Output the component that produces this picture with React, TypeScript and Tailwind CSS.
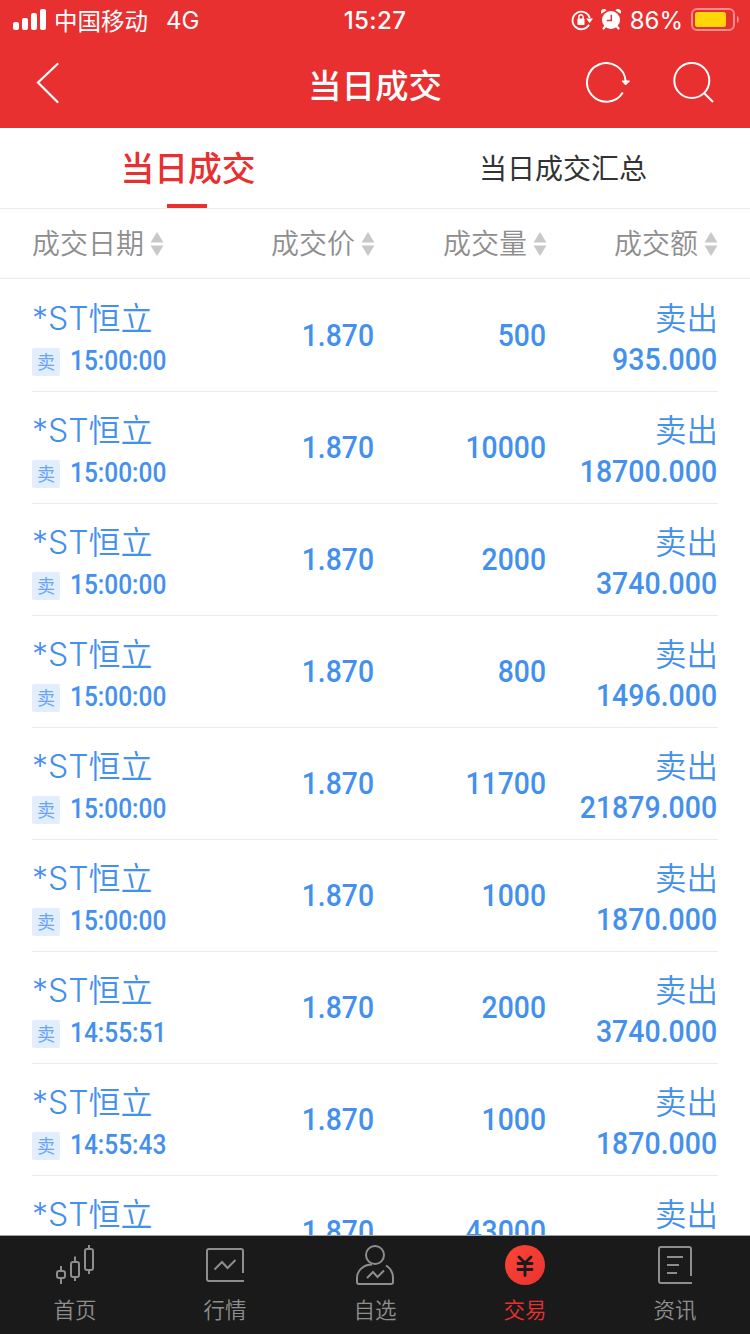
import { ReactNode } from "react";
import clsx from "clsx";

interface Deal {
  time: string;
  price: string;
  volume: string;
  amount: string;
}

const deals: Deal[] = [
  { time: "15:00:00", price: "1.870", volume: "500", amount: "935.000" },
  { time: "15:00:00", price: "1.870", volume: "10000", amount: "18700.000" },
  { time: "15:00:00", price: "1.870", volume: "2000", amount: "3740.000" },
  { time: "15:00:00", price: "1.870", volume: "800", amount: "1496.000" },
  { time: "15:00:00", price: "1.870", volume: "11700", amount: "21879.000" },
  { time: "15:00:00", price: "1.870", volume: "1000", amount: "1870.000" },
  { time: "14:55:51", price: "1.870", volume: "2000", amount: "3740.000" },
  { time: "14:55:43", price: "1.870", volume: "1000", amount: "1870.000" },
  { time: "14:55:43", price: "1.870", volume: "43000", amount: "80410.000" },
];

const columns = ["成交日期", "成交价", "成交量", "成交额"];

function StatusBar() {
  return (
    <div className="grid h-10 grid-cols-3 items-start">
      <div className="flex items-start pl-[13px]">
        <svg className="mt-[9px]" width="33" height="21" fill="white">
          <rect x="0" y="13" width="6" height="8" rx="2" />
          <rect x="9" y="9" width="6" height="12" rx="2" />
          <rect x="18" y="4" width="6" height="17" rx="2" />
          <rect x="27" y="0" width="6" height="21" rx="2" />
        </svg>
        <span className="ml-2 text-[23.5px] leading-[43px]">中国移动</span>
        <span className="ml-[18px] text-[24px] leading-[42px]">4G</span>
      </div>
      <div className="text-center text-[24px] font-medium leading-[42px] tracking-[0.4px]">15:27</div>
      <div className="flex items-start justify-end pr-[10px]">
        <svg className="mt-[9px]" width="22" height="22" viewBox="0 0 22 22" fill="none" stroke="white" strokeWidth="1.8">
          <path d="M18 15.800A8.800 8.800 0 1 1 18.8 9" />
          <path d="M15.2 9.5h6.8l-3.4 4.500z" fill="white" stroke="none" />
          <rect x="6.500" y="9.5" width="7" height="6.500" rx="0.8" fill="white" stroke="none" />
          <path d="M7.8 10V8a2.2 2.2 0 0 1 4.4 0v2" strokeWidth="1.4" />
        </svg>
        <svg className="mt-[9px] ml-2" width="20" height="22" viewBox="0 0 20 22">
          <circle cx="10" cy="11" r="9" fill="white" />
          <path d="M0.5 4.8a3 3 0 0 1 5-3.4zM19.5 4.8a3 3 0 0 0-5-3.4z" fill="white" />
          <path d="m4.5 17-2 2.5m13-2.5 2 2.5" stroke="white" strokeWidth="2.2" strokeLinecap="round" />
          <path d="M10.3 5.8v5.6H5.8" fill="none" stroke="#e83030" strokeWidth="1.5" />
        </svg>
        <span className="ml-[9px] text-[24px] leading-[42px]">86%</span>
        <svg className="mt-2 ml-2" width="49" height="23" viewBox="0 0 49 23">
          <rect x="1" y="1" width="42" height="21" rx="5" fill="none" stroke="white" strokeOpacity="0.45" strokeWidth="2" />
          <rect x="4" y="4" width="31" height="15" rx="2.5" fill="#ffd60a" />
          <path d="M46 8c2.4 1.2 2.4 6 0 7z" fill="white" fillOpacity="0.5" />
        </svg>
      </div>
    </div>
  );
}

function TitleBar() {
  return (
    <div className="grid h-22 grid-cols-3 items-start">
      <svg className="mt-[22px] ml-9" width="24" height="42" viewBox="0 0 24 42" fill="none" stroke="white" strokeWidth="2.2">
        <path d="M21.5 2 2 20.5 21.5 40" strokeLinecap="round" />
      </svg>
      <h1 className="pt-1 text-center text-[33.5px] font-medium leading-[84px]">当日成交</h1>
      <div className="flex justify-end pt-[22px] pr-[35px]">
        <svg width="44" height="42" viewBox="0 0 44 42" fill="none" stroke="white" strokeWidth="2">
          <path d="M36.8 30.5A19.3 19.3 0 1 1 39.6 19" />
          <path d="M36 19h7.5L39.6 23z" fill="white" stroke="white" strokeWidth="1" strokeLinejoin="round" />
        </svg>
        <svg className="ml-[43px]" width="42" height="42" viewBox="0 0 42 42" fill="none" stroke="white" strokeWidth="2">
          <circle cx="18.8" cy="18.500" r="17.500" />
          <path d="m31 31 9 9" />
        </svg>
      </div>
    </div>
  );
}

function SortIcon() {
  return (
    <svg className="ml-1.5 shrink-0" width="14" height="24" viewBox="0 0 14 24" fill="#c8c8c8">
      <path d="M7 0 13.5 10.5H0.5z" />
      <path d="M7 24 13.5 13.5H0.5z" />
    </svg>
  );
}

function DealRow({ deal }: { deal: Deal }) {
  return (
    <div className="mx-8 grid h-28 shrink-0 grid-cols-[342px_172px_172px] border-b border-[#ebebeb] text-[#4390ee]">
      <div className="grid grid-cols-2">
        <div className="pt-4">
          <div className="whitespace-nowrap text-[32px] font-[350] leading-[46px]">*ST恒立</div>
          <div className="mt-[6px] flex h-7 items-center">
            <span className="flex size-7 items-center justify-center rounded-xs bg-[#e2eefd] pt-[2px] text-[18px] leading-7 text-[#69a6f2]">
              卖
            </span>
            <span className="-mt-[2px] ml-[10px] origin-left scale-x-[0.89] font-[Roboto] text-[27.5px] font-medium leading-7">
              {deal.time}
            </span>
          </div>
        </div>
        <Figure value={deal.price} />
      </div>
      <Figure value={deal.volume} />
      <div className="pt-4 text-right">
        <div className="text-[31.5px] font-[350] leading-[46px]">卖出</div>
        <div className="origin-right scale-x-[0.89] pr-px font-[Roboto] text-[32px] font-medium leading-[35px]">
          {deal.amount}
        </div>
      </div>
    </div>
  );
}

function Figure({ value }: { value: string }) {
  return (
    <div className="origin-right scale-x-[0.885] text-right font-[Roboto] text-[32px] font-medium leading-[110px]">
      {value}
    </div>
  );
}

function NavItem({ label, active, children }: { label: string; active?: boolean; children: ReactNode }) {
  return (
    <div className={clsx("flex flex-col items-center pt-[9px]", active ? "text-[#e83030]" : "text-[#8e8e8e]")}>
      <svg width="40" height="40" viewBox="0 0 40 40" fill="none" stroke="currentColor" strokeWidth="2">
        {children}
      </svg>
      <span className="mt-[9px] text-[21.5px] font-[350] leading-8">{label}</span>
    </div>
  );
}

function BottomNav() {
  return (
    <nav className="grid h-[99px] shrink-0 grid-cols-5 border-t border-[#a0a0a0] bg-[#1a1a1a]">
      <NavItem label="首页">
        <rect x="2" y="26" width="8" height="7" rx="2" />
        <rect x="16" y="17" width="8" height="15" rx="2" />
        <rect x="30" y="4" width="8" height="21" rx="2" />
        <path d="M6 21v5m0 7v6M20 11.5V17m0 15v4M34 0v4m0 21v4" />
      </NavItem>
      <NavItem label="行情">
        <path d="M38 28V6a2 2 0 0 0-2-2H4a2 2 0 0 0-2 2v28a2 2 0 0 0 2 2h35" />
        <path d="m9.5 24.5 7.5-7.5 5.5 6 8-8" />
      </NavItem>
      <NavItem label="自选">
        <circle cx="20" cy="10" r="9" />
        <path d="M17 19.5C8 19.5 2 26 2 33v4a2 2 0 0 0 2 2h32a2 2 0 0 0 2-2v-4c0-5-2-9.5-7-12.5" />
        <path d="m12 33 6-6 4.5 5 6.5-6.5" />
      </NavItem>
      <NavItem label="交易" active>
        <defs>
          <linearGradient id="coin" x1="0" y1="0" x2="1" y2="1">
            <stop stopColor="#fb4634" />
            <stop offset="1" stopColor="#e93232" />
          </linearGradient>
        </defs>
        <circle cx="20" cy="20" r="20" fill="url(#coin)" stroke="none" />
        <path d="m14 12 6 6 6-6M13 18.5h14M13 24.5h14M20 18v12.5" stroke="#1a1a1a" strokeWidth="2.8" strokeLinecap="round" />
      </NavItem>
      <NavItem label="资讯">
        <path d="M36 31V4a2 2 0 0 0-2-2H6a2 2 0 0 0-2 2v32a2 2 0 0 0 2 2h31M12 12h16M12 20h12M12 28h10" />
      </NavItem>
    </nav>
  );
}

export default function App() {
  return (
    <div className="flex h-[1334px] w-[750px] flex-col overflow-hidden bg-white font-[Inter,'Noto_Sans_CJK_SC',sans-serif]">
      <header className="shrink-0 bg-[#e83030] text-white">
        <StatusBar />
        <TitleBar />
      </header>

      <div className="grid h-[81px] shrink-0 grid-cols-2 border-b border-[#ebebeb]">
        <div className="flex flex-col items-center justify-between pr-px text-[#e83030]">
          <span className="-mr-[2px] pt-[6px] text-[33.8px] font-medium leading-[70px]">当日成交</span>
          <span className="h-1 w-10 bg-[#e83030]" />
        </div>
        <div className="pt-[2px] pl-px text-center text-[28px] leading-[78px] text-[#333333]">当日成交汇总</div>
      </div>

      <div className="grid h-[70px] shrink-0 grid-cols-[171px_172px_172px_171px] border-b border-[#ebebeb] px-8">
        {columns.map((name, i) => (
          <div
            key={name}
            className={clsx(
              "flex items-center text-[28px] font-[350] leading-[68px] text-[#8e8e8e]",
              i > 0 && "justify-end",
            )}
          >
            <span className="pt-px">{name}</span>
            <SortIcon />
          </div>
        ))}
      </div>

      <main className="flex min-h-0 flex-1 flex-col overflow-hidden pt-px">
        {deals.map((deal, i) => (
          <DealRow key={i} deal={deal} />
        ))}
      </main>

      <BottomNav />
    </div>
  );
}
